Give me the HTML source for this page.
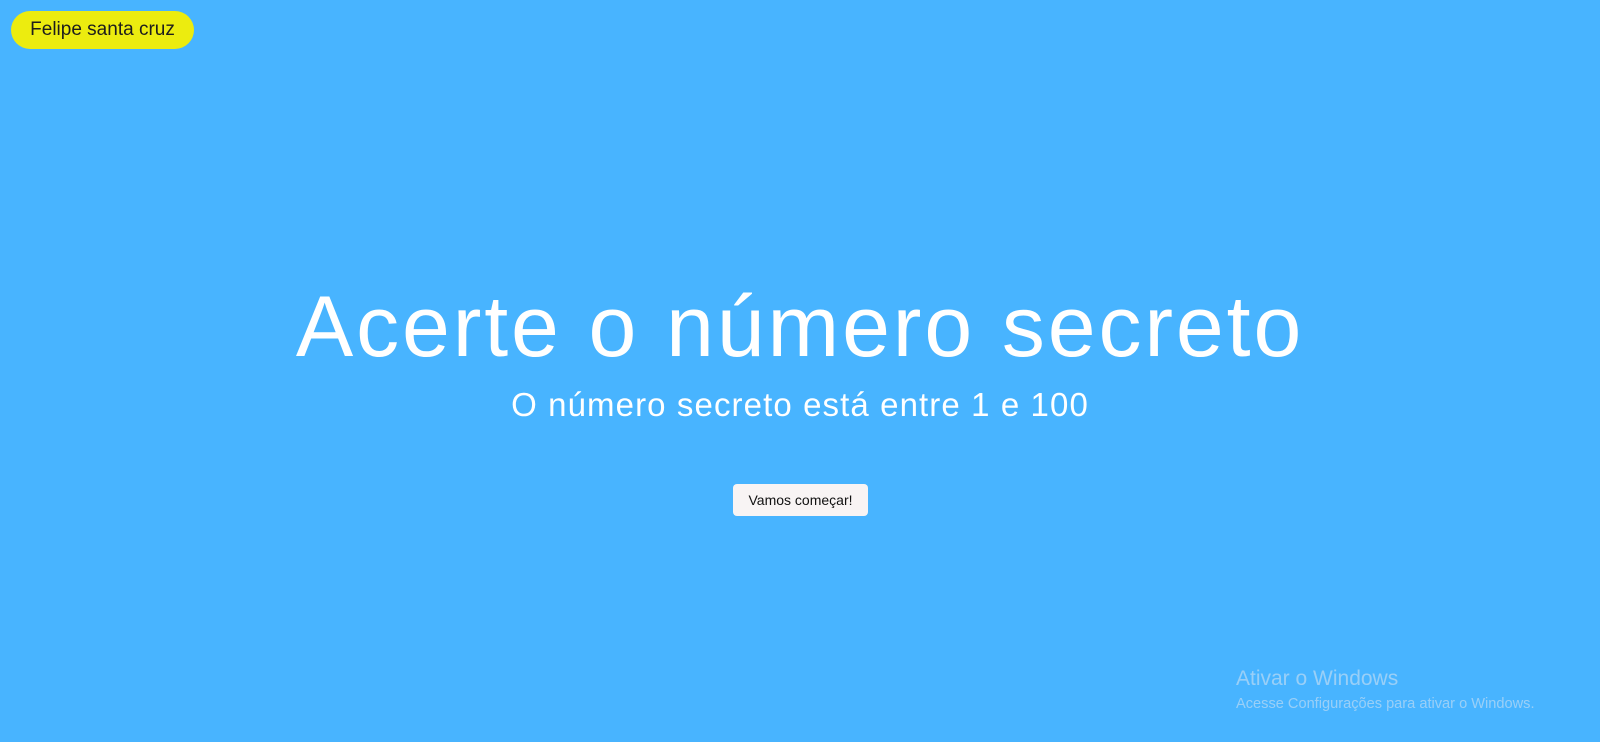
<!DOCTYPE html>
<html><head><meta charset="utf-8"><style>
html,body{margin:0;padding:0;width:1600px;height:742px;overflow:hidden;background:#48b4ff;font-family:"Liberation Sans",sans-serif;}
.tag{position:absolute;left:11px;top:11px;height:38px;width:183px;background:#ecec0f;border-radius:19px;color:#1d1d1d;font-size:19px;line-height:38px;text-align:center;box-sizing:border-box;}
h1{position:absolute;left:0;width:1600px;top:277px;margin:0;text-align:center;color:#fff;font-weight:300;font-size:86px;line-height:100px;letter-spacing:2.9px;}
h2{position:absolute;left:0;width:1600px;top:385px;margin:0;text-align:center;color:#fff;font-weight:300;font-size:33px;line-height:40px;letter-spacing:1.1px;}
.btn{position:absolute;left:733px;top:484px;width:135px;height:32px;background:#f8f4f4;border-radius:4px;font-size:14px;line-height:32px;text-align:center;color:#111;}
.w1{position:absolute;left:1236px;top:667px;font-size:21px;color:rgba(220,230,240,.55);}
.w2{position:absolute;left:1236px;top:696px;font-size:14.6px;color:rgba(220,230,240,.55);}
</style></head><body>
<div class="tag">Felipe santa cruz</div>
<h1>Acerte o número secreto</h1>
<h2>O número secreto está entre 1 e 100</h2>
<div class="btn">Vamos começar!</div>
<div class="w1">Ativar o Windows</div>
<div class="w2">Acesse Configurações para ativar o Windows.</div>
</body></html>
